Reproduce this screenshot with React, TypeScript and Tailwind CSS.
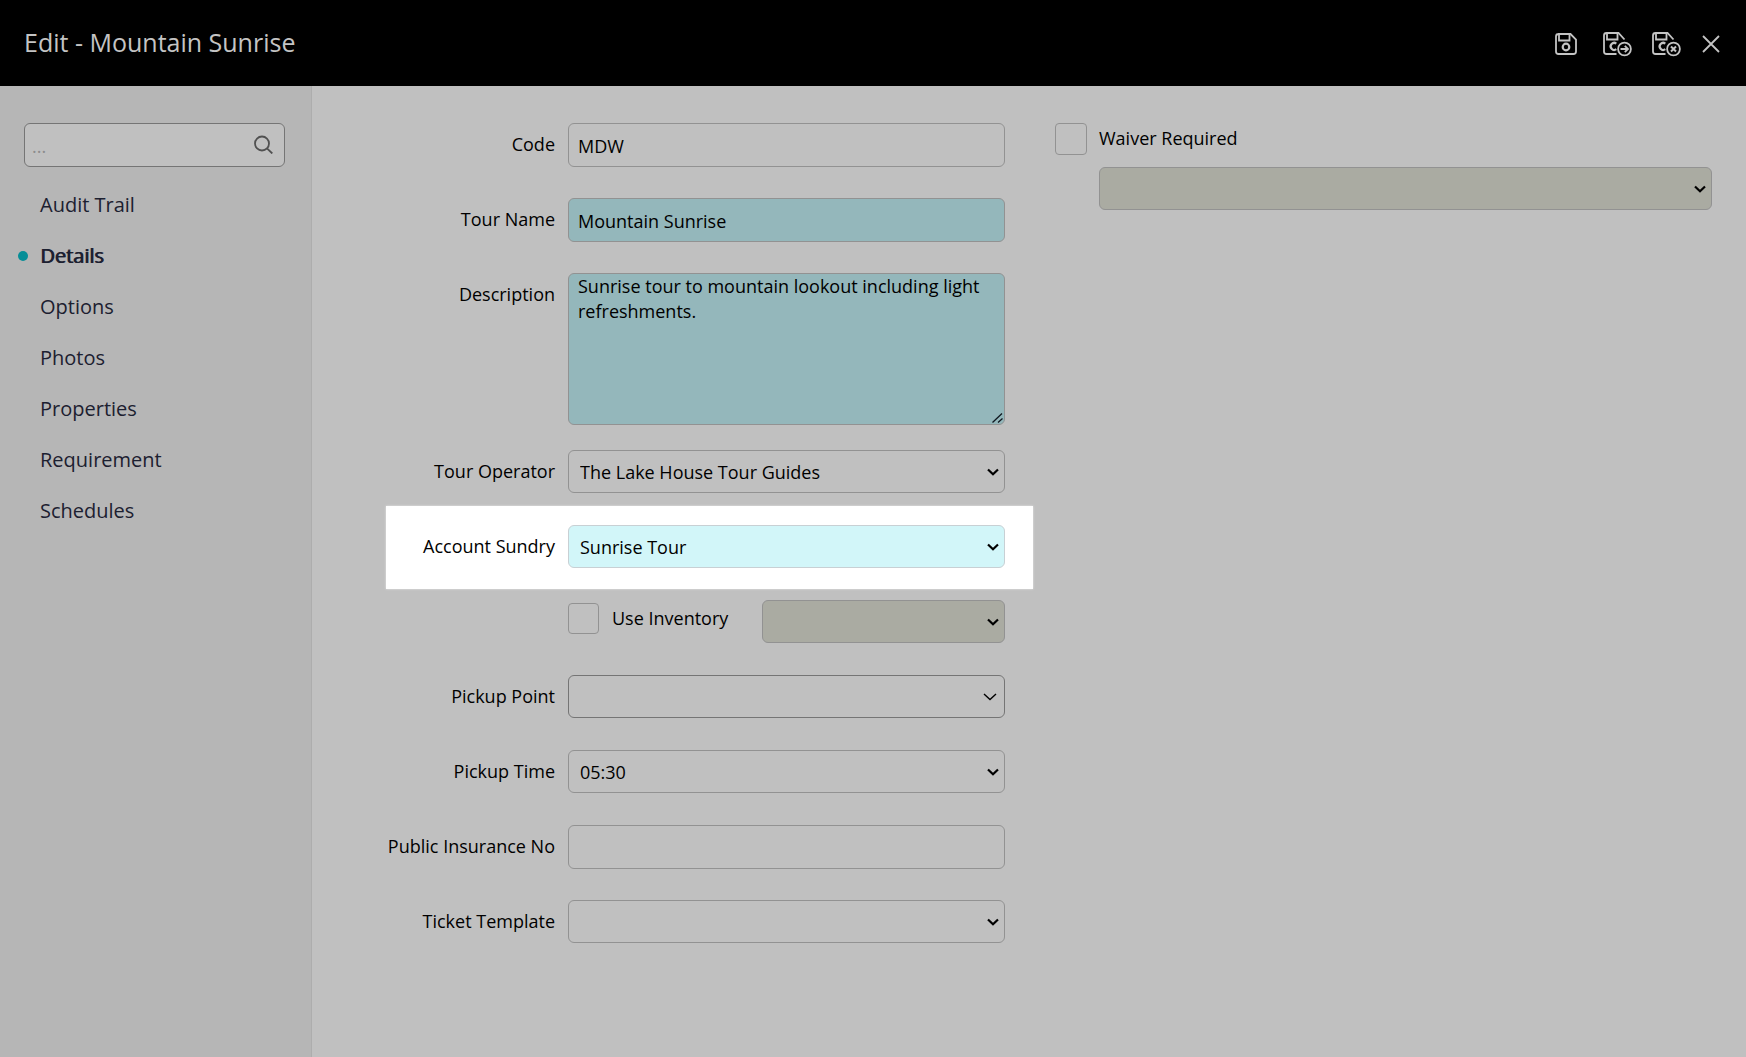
import { useState } from "react";
import type { ReactNode, SelectHTMLAttributes } from "react";
import { twMerge } from "tailwind-merge";

const navItems = [
  "Audit Trail",
  "Details",
  "Options",
  "Photos",
  "Properties",
  "Requirement",
  "Schedules",
];

const inputStyles =
  "block h-11 w-full rounded-md border border-[#929292] bg-transparent px-[9px] pt-0.5 text-lg text-black outline-none";

function FloppyIcon() {
  return (
    <svg width="24" height="24" viewBox="0 0 24 24" fill="none" stroke="currentColor" strokeWidth="1.8">
      <path d="M4 2H16.5L22 7.5V19.5a2.5 2.5 0 0 1-2.5 2.5H4.500A2.500 2.500 0 0 1 2 19.500V4.500A2.500 2.500 0 0 1 4.500 2Z" />
      <path d="M5 2V8.500H15.500V2" />
      <circle cx="12" cy="15" r="3.300" strokeWidth="2.200" />
    </svg>
  );
}

function FloppyBadgeIcon({ children }: { children: ReactNode }) {
  return (
    <svg width="31" height="26" viewBox="0 0 31 26" fill="none" stroke="currentColor" strokeWidth="1.8">
      <path d="M14.500 23H4.500A2.500 2.500 0 0 1 2 20.500V4.500A2.500 2.500 0 0 1 4.500 2H16.500L22.500 8.500" />
      <path d="M5 2V8.500H15.500V2" />
      <path d="M14.300 12.600A3.500 3.500 0 1 0 14.300 18.200" strokeWidth="2.200" />
      <circle cx="22.500" cy="18" r="6.400" />
      {children}
    </svg>
  );
}

function Chevron({ thin }: { thin?: boolean }) {
  return (
    <svg
      className={twMerge(
        "pointer-events-none absolute top-1/2 right-1.5 -translate-y-1/2 text-black",
        thin && "right-2",
      )}
      width={thin ? 14 : 12}
      height="8"
      viewBox={thin ? "0 0 14 8" : "0 0 12 8"}
      fill="none"
      stroke="currentColor"
      strokeWidth={thin ? 1.4 : 2.2}
    >
      <path d={thin ? "M1 1L7 6.500L13 1" : "M1 1.500L6 6.300L11 1.500"} />
    </svg>
  );
}

type SelectProps = SelectHTMLAttributes<HTMLSelectElement> & {
  thin?: boolean;
  wrapperClassName?: string;
};

function Select({ thin, wrapperClassName, className, children, ...props }: SelectProps) {
  return (
    <div className={twMerge("relative w-full", wrapperClassName)}>
      <select
        className={twMerge(
          inputStyles,
          "h-[43px] appearance-none px-[11px] pt-0 opacity-100",
          className,
        )}
        {...props}
      >
        {children}
      </select>
      <Chevron thin={thin} />
    </div>
  );
}

type FieldProps = {
  id: string;
  label: string;
  className?: string;
  children: ReactNode;
};

function Field({ id, label, className, children }: FieldProps) {
  return (
    <div className={twMerge("mb-8 flex items-start gap-[13px] pr-7", className)}>
      <label htmlFor={id} className="w-[169px] shrink-0 text-right leading-[43px]">
        {label}
      </label>
      <div className="min-w-0 flex-1">{children}</div>
    </div>
  );
}

function Header() {
  return (
    <header className="flex h-[86px] shrink-0 items-center justify-between bg-black pr-[26px] pl-6 text-[#c4c4c4]">
      <h1 className="pb-[3px] text-[25px] leading-8">Edit - Mountain Sunrise</h1>
      <div className="flex items-center gap-[18px] pt-0.5">
        <button type="button" aria-label="Save" className="mr-1.5">
          <FloppyIcon />
        </button>
        <button type="button" aria-label="Save and continue">
          <FloppyBadgeIcon>
            <path d="M18.500 18H26M22.800 14.800L26 18L22.800 21.200" />
          </FloppyBadgeIcon>
        </button>
        <button type="button" aria-label="Save and close" className="mr-0.5">
          <FloppyBadgeIcon>
            <path d="M20 15.500L25 20.500M25 15.500L20 20.500" strokeWidth="2" />
          </FloppyBadgeIcon>
        </button>
        <button type="button" aria-label="Close">
          <svg width="18" height="18" viewBox="0 0 18 18" fill="none" stroke="currentColor" strokeWidth="1.800">
            <path d="M1 1L17 17M17 1L1 17" />
          </svg>
        </button>
      </div>
    </header>
  );
}

function Sidebar() {
  const [active, setActive] = useState("Details");

  return (
    <aside className="w-[312px] shrink-0 border-r border-[#adadad] bg-[#b6b6b6] pt-[37px] pr-[26px] pl-6">
      <div className="relative">
        <input
          type="search"
          aria-label="Search sections"
          placeholder="..."
          className="block h-11 w-full rounded-md border border-[#757575] bg-[#c0c0c0] px-[7px] pt-0.5 text-lg outline-none placeholder:text-[#8c8c8c]"
        />
        <svg
          className="pointer-events-none absolute top-3 right-3 text-[#505050]"
          width="19"
          height="19"
          viewBox="0 0 19 19"
          fill="none"
          stroke="currentColor"
          strokeWidth="1.800"
        >
          <circle cx="8" cy="8.500" r="7" />
          <path d="M13 13.300L18.300 18.500" />
        </svg>
      </div>
      <nav className="mt-3">
        <ul>
          {navItems.map((item) => (
            <li key={item}>
              <a
                href="#"
                onClick={() => setActive(item)}
                className={twMerge(
                  "relative flex h-[51px] items-center pl-4 text-xl text-[#1c2030]",
                  active === item && "[text-shadow:1px_0_currentColor]",
                )}
              >
                {active === item && (
                  <span className="absolute -left-1.5 size-2.5 rounded-full bg-[#068e97]" />
                )}
                {item}
              </a>
            </li>
          ))}
        </ul>
      </nav>
    </aside>
  );
}

export default function App() {
  return (
    <div className="flex min-h-screen flex-col bg-[#c0c0c0] font-['Open_Sans',sans-serif] text-lg text-black">
      <Header />
      <div className="flex flex-1">
        <Sidebar />
        <main className="grid flex-1 grid-cols-[647fr_657fr] content-start gap-[22px] pt-[37px] pr-[34px] pl-[74px]">
          <form>
            <Field id="code" label="Code" className="mb-[31px]">
              <input id="code" defaultValue="MDW" className={inputStyles} />
            </Field>
            <Field id="name" label="Tour Name" className="mb-[31px]">
              <input
                id="name"
                defaultValue="Mountain Sunrise"
                className={twMerge(inputStyles, "bg-[#94b7bb]")}
              />
            </Field>
            <Field id="description" label="Description" className="mb-[25px]">
              <div className="relative">
                <textarea
                  id="description"
                  defaultValue="Sunrise tour to mountain lookout including light refreshments."
                  className={twMerge(
                    inputStyles,
                    "h-[152px] resize-none bg-[#94b7bb] pt-0 leading-[25px]",
                  )}
                />
                <svg
                  className="pointer-events-none absolute right-0.5 bottom-0.5 text-[#101820]"
                  width="11"
                  height="10"
                  viewBox="0 0 11 10"
                  stroke="currentColor"
                  strokeWidth="1.300"
                >
                  <path d="M0.500 9.500L10 0.500M6 9.500L10.500 5.500" />
                </svg>
              </div>
            </Field>
            <Field id="operator" label="Tour Operator" className="mb-[13px]">
              <Select id="operator">
                <option>The Lake House Tour Guides</option>
              </Select>
            </Field>
            <Field
              id="sundry"
              label="Account Sundry"
              className="mb-[11px] h-[83px] bg-white pt-[19px] shadow-[0_0_2px_#e8e8e8]"
            >
              <Select id="sundry" className="border-[#c8d0d4] bg-[#d2f6f9]">
                <option>Sunrise Tour</option>
              </Select>
            </Field>
            <div className="mb-8 flex items-start pr-7 pl-[182px]">
              <label className="mt-[3px] flex flex-1 items-center gap-[13px] leading-[31px]">
                <input
                  type="checkbox"
                  className="size-[31px] shrink-0 appearance-none rounded-sm border border-[#929292]"
                />
                Use Inventory
              </label>
              <Select
                aria-label="Inventory"
                disabled
                wrapperClassName="w-[243px]"
                className="bg-[#aaaba2]"
              />
            </div>
            <Field id="pickup-point" label="Pickup Point">
              <Select id="pickup-point" thin className="border-[#757575]" />
            </Field>
            <Field id="pickup-time" label="Pickup Time">
              <Select id="pickup-time">
                <option>05:30</option>
              </Select>
            </Field>
            <Field id="insurance" label="Public Insurance No" className="mb-[31px]">
              <input id="insurance" className={inputStyles} />
            </Field>
            <Field id="ticket" label="Ticket Template">
              <Select id="ticket" />
            </Field>
          </form>
          <section>
            <label className="flex items-start gap-3 leading-[30px]">
              <input
                type="checkbox"
                className="size-8 shrink-0 appearance-none rounded-sm border border-[#929292]"
              />
              Waiver Required
            </label>
            <div className="mt-3 pl-11">
              <Select aria-label="Waiver" disabled className="bg-[#aaaba2]" />
            </div>
          </section>
        </main>
      </div>
    </div>
  );
}
